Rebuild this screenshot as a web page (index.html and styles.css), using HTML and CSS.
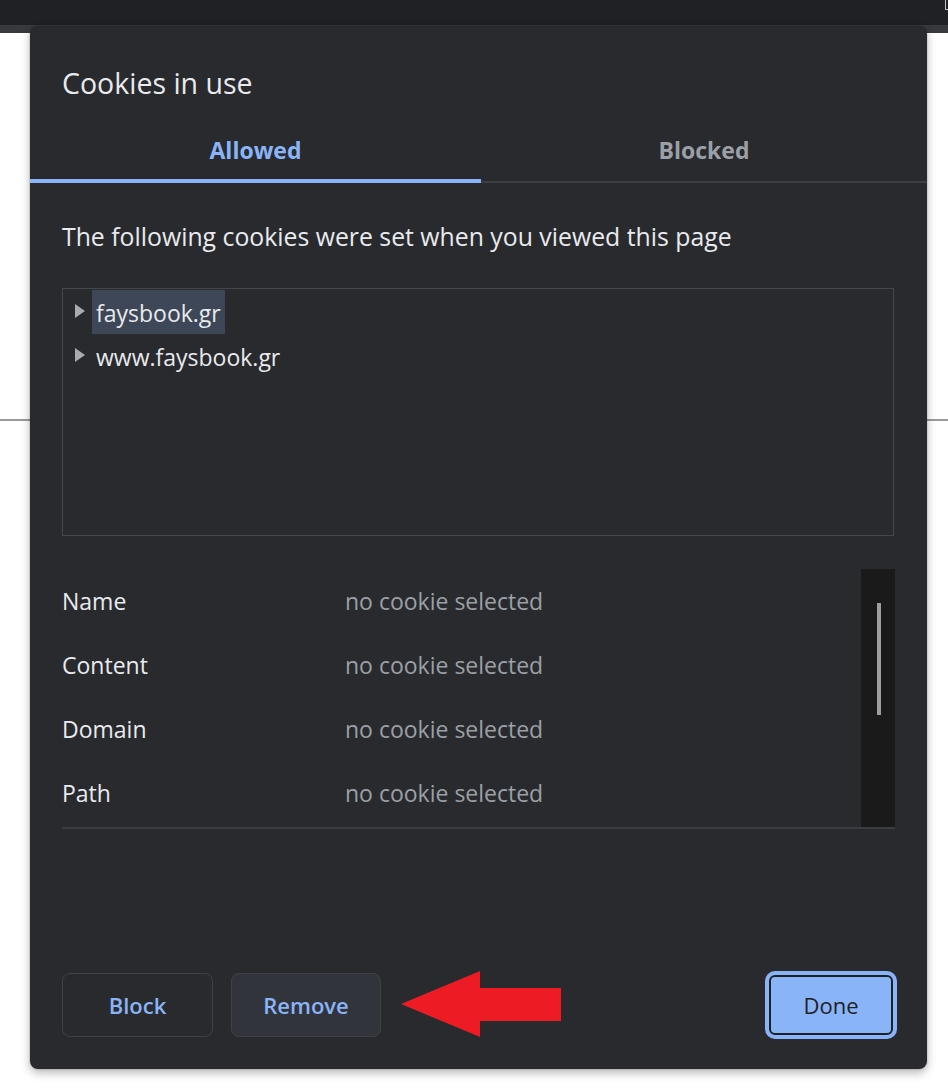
FILE: index.html
```html
<!DOCTYPE html>
<html>
<head>
<meta charset="utf-8">
<link rel="stylesheet" href="styles.css">
</head>
<body>
<div class="topbar"><span class="corner-icon"></span></div>
<div class="strip"></div>
<div class="page">
  <div class="page-rule"></div>
</div>

<div class="dialog">
  <h1 class="title">Cookies in use</h1>
  <div class="tabs">
    <div class="tab active">Allowed</div>
    <div class="tab">Blocked</div>
  </div>
  <div class="body">
    <p class="desc">The following cookies were set when you viewed this page</p>
    <div class="tree">
      <div class="tree-row">
        <span class="twisty"></span>
        <span class="tree-label selected">faysbook.gr</span>
      </div>
      <div class="tree-row">
        <span class="twisty"></span>
        <span class="tree-label">www.faysbook.gr</span>
      </div>
    </div>
    <div class="details">
      <div class="rows">
        <div class="row"><span class="key">Name</span><span class="val">no cookie selected</span></div>
        <div class="row"><span class="key">Content</span><span class="val">no cookie selected</span></div>
        <div class="row"><span class="key">Domain</span><span class="val">no cookie selected</span></div>
        <div class="row"><span class="key">Path</span><span class="val">no cookie selected</span></div>
      </div>
      <div class="scrolltrack"><div class="thumb"></div></div>
    </div>
    <div class="footer">
      <button class="btn">Block</button>
      <button class="btn tonal">Remove</button>
      <span class="spacer"></span>
      <button class="btn primary">Done</button>
    </div>
  </div>
</div>

<svg class="arrow" width="162" height="68" viewBox="0 0 162 68">
  <polygon points="0,33 79,0 79,17 160,17 160,50 79,50 79,66" fill="#ed1c24"/>
</svg>
</body>
</html>
```

FILE: styles.css
```css
html, body {
  margin: 0;
  padding: 0;
  overflow: hidden;
}
body {
  width: 948px;
  height: 1092px;
  background: #ffffff;
  font-family: "Open Sans", "Noto Sans", sans-serif;
  position: relative;
}
.topbar {
  height: 25px;
  background: #202124;
  display: flex;
  justify-content: flex-end;
}
.corner-icon {
  width: 3px;
  height: 10px;
  box-sizing: border-box;
  border-left: 1px solid #bdc1c6;
  border-bottom: 1px solid #bdc1c6;
}
.strip {
  height: 8px;
  background: #38393c;
}
.page {
  height: 1000px;
}
.page-rule {
  margin-top: 386px;
  height: 2px;
  background: #9a9a9a;
}

.dialog {
  position: absolute;
  left: 30px;
  top: 26px;
  width: 897px;
  height: 1043px;
  background: #292a2d;
  border-radius: 8px;
  box-shadow: 0 4px 10px rgba(0,0,0,0.28), 0 0 2px rgba(0,0,0,0.3);
  color: #e8eaed;
  display: flex;
  flex-direction: column;
  box-sizing: border-box;
}
.title {
  margin: 0;
  padding: 39px 32px 0;
  font-size: 28.5px;
  font-weight: 400;
  line-height: 36px;
  height: 36px;
}
.tabs {
  margin-top: 17px;
  display: flex;
  box-shadow: inset 0 -2px 0 #3c4043;
}
.tab {
  flex: 1;
  height: 65px;
  box-sizing: border-box;
  padding-top: 3px;
  border-bottom: 4px solid transparent;
  display: flex;
  align-items: center;
  justify-content: center;
  font-size: 23px;
  font-weight: 700;
  color: #9aa0a6;
}
.tab.active {
  flex: 0 0 451px;
  color: #8ab4f8;
  border-bottom-color: #8ab4f8;
}
.body {
  flex: 1;
  display: flex;
  flex-direction: column;
  padding: 0 32px 30px;
}
.desc {
  margin: 37px 0 0;
  font-size: 24.8px;
  line-height: 32px;
}
.tree {
  margin-top: 36px;
  padding-top: 1px;
  height: 248px;
  box-sizing: border-box;
  border: 1px solid #45474b;
  width: 832px;
}
.tree-row {
  height: 44px;
  display: flex;
  align-items: center;
  padding-left: 12px;
}
.twisty {
  width: 0;
  height: 0;
  border-top: 7.5px solid transparent;
  border-bottom: 7.5px solid transparent;
  border-left: 10px solid #a8abaf;
  margin-right: 7px;
  margin-top: -2px;
}
.tree-label {
  font-size: 23px;
  line-height: 46px;
  padding: 0 4px;
  height: 44px;
}
.tree-label.selected {
  background: #3e4757;
}
.details {
  margin-top: 33px;
  height: 258px;
  display: flex;
  border-bottom: 2px solid #3c3d41;
}
.rows {
  flex: 1;
}
.row {
  height: 64px;
  display: flex;
  align-items: center;
  font-size: 23px;
}
.key {
  width: 283px;
  color: #e8eaed;
}
.val {
  color: #9aa0a6;
}
.scrolltrack {
  width: 34px;
  background: #1a1a1a;
  display: flex;
  justify-content: flex-start;
}
.thumb {
  width: 4px;
  height: 112px;
  margin-top: 34px;
  margin-left: 16px;
  background: #9e9e9e;
}
.footer {
  margin-top: auto;
  height: 68px;
  display: flex;
  align-items: center;
}
.spacer {
  flex: 1;
}
.btn {
  font-family: "Open Sans", "Noto Sans", sans-serif;
  font-size: 22px;
  font-weight: 600;
  color: #8ab4f8;
  background: transparent;
  border: 1px solid #3f4145;
  border-radius: 8px;
  width: 151px;
  height: 64px;
  padding: 0;
}
.btn.tonal {
  margin-left: 18px;
  width: 150px;
  background: #31343b;
}
.btn.primary {
  width: 124px;
  height: 60px;
  margin-right: 2px;
  background: #8ab4f8;
  color: #202124;
  border: 2px solid #202124;
  border-radius: 6px;
  box-shadow: 0 0 0 4px #8ab4f8;
  font-weight: 500;
}

.arrow {
  position: absolute;
  left: 401px;
  top: 971px;
}
```
